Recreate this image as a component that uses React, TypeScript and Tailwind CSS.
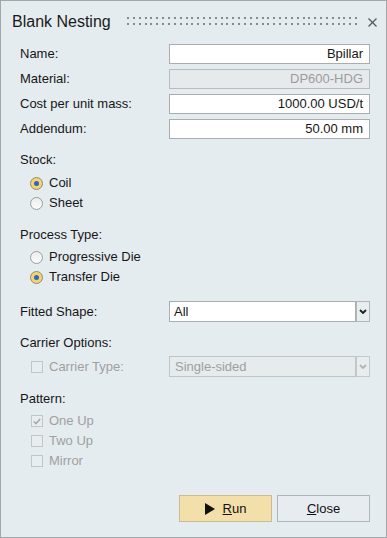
import React from "react";

function Radio({ checked, label }: { checked: boolean; label: string }) {
  return (
    <div className="flex items-center h-[20px] pl-[10px]">
      {checked ? (
        <span className="w-[13px] h-[13px] rounded-full border border-[#8f8b7c] bg-[#f6d36c] flex items-center justify-center">
          <span className="w-[5px] h-[5px] rounded-full bg-[#2b66c9]" />
        </span>
      ) : (
        <span className="w-[13px] h-[13px] rounded-full border border-[#9c9c9c] bg-gradient-to-b from-[#ececec] to-[#fbfbfb]" />
      )}
      <span className="ml-[6px] text-[#161616]">{label}</span>
    </div>
  );
}

function Check({ checked, label }: { checked: boolean; label: string }) {
  return (
    <div className="flex items-center h-[20px] pl-[11px]">
      <span className="w-[12px] h-[12px] border border-[#c3c6c8] bg-[#e8edf0] flex items-center justify-center">
        {checked && (
          <svg width="8" height="7" viewBox="0 0 8 7">
            <polyline points="0.8,3.5 3,5.6 7.2,1" fill="none" stroke="#a8a8a8" strokeWidth="1.6" />
          </svg>
        )}
      </span>
      <span className="ml-[6px] text-[#a0a0a0]">{label}</span>
    </div>
  );
}

function Chevron({ color }: { color: string }) {
  return (
    <svg width="8" height="5" viewBox="0 0 8 5">
      <polyline points="1,1 4,4 7,1" fill="none" stroke={color} strokeWidth="1.8" />
    </svg>
  );
}

const dots = Array.from({ length: 40 }, (_, i) => Math.round(i * 5.85));

export default function App() {
  const fields = [
    { label: "Name:", value: "Bpillar", disabled: false },
    { label: "Material:", value: "DP600-HDG", disabled: true },
    { label: "Cost per unit mass:", value: "1000.00 USD/t", disabled: false },
    { label: "Addendum:", value: "50.00 mm", disabled: false },
  ];
  return (
    <div className="w-[387px] h-[538px] border border-[#a3a7aa] bg-[#e5ecf0] font-['Liberation_Sans',Arial,sans-serif] text-[13px] text-[#161616] flex flex-col">
      {/* Title bar */}
      <div className="mt-[10px] h-[22px] pl-[11px] flex items-center">
        <div className="w-[115px] text-[16px] leading-[22px] text-[#1a1a1a]">Blank Nesting</div>
        <svg width="231" height="22" className="shrink-0">
          {dots.map((x) => (
            <g key={x}>
              <rect x={x} y="6" width="2" height="2" fill="#878b8e" />
              <rect x={x} y="12" width="2" height="2" fill="#878b8e" />
            </g>
          ))}
        </svg>
        <svg width="9" height="9" viewBox="0 0 9 9" className="ml-[10px] shrink-0">
          <line x1="0.5" y1="0.5" x2="8.5" y2="8.5" stroke="#5a5a5a" strokeWidth="1.2" />
          <line x1="8.5" y1="0.5" x2="0.5" y2="8.5" stroke="#5a5a5a" strokeWidth="1.2" />
        </svg>
      </div>

      <div className="pl-[19px] pr-[16px] flex flex-col">
        {/* Fields */}
        <div className="mt-[11px] flex flex-col gap-[5px]">
          {fields.map((f) => (
            <div key={f.label} className="grid grid-cols-[149px_201px] h-[20px] items-center">
              <span>{f.label}</span>
              {f.disabled ? (
                <div className="h-[20px] border border-[#b9bcbe] bg-[#e6eaed] text-[#9c9c9c] text-right pr-[6px] leading-[18px]">
                  {f.value}
                </div>
              ) : (
                <div className="h-[20px] border border-[#a9adb0] bg-white text-right pr-[6px] leading-[18px]">
                  {f.value}
                </div>
              )}
            </div>
          ))}
        </div>

        {/* Stock */}
        <div className="mt-[12px] h-[18px] leading-[18px]">Stock:</div>
        <div className="mt-[4px]">
          <Radio checked label="Coil" />
          <Radio checked={false} label="Sheet" />
        </div>

        {/* Process type */}
        <div className="mt-[13px] h-[18px] leading-[18px]">Process Type:</div>
        <div className="mt-[3px]">
          <Radio checked={false} label="Progressive Die" />
          <Radio checked label="Transfer Die" />
        </div>

        {/* Fitted shape */}
        <div className="mt-[14px] grid grid-cols-[149px_201px] h-[21px] items-center">
          <span>Fitted Shape:</span>
          <div className="flex h-[21px]">
            <div className="flex-1 border border-[#a9adb0] bg-white pl-[4px] leading-[19px]">All</div>
            <div className="w-[14px] border border-[#b3b7ba] bg-[#e8edf0] flex items-center justify-center">
              <Chevron color="#1e1e1e" />
            </div>
          </div>
        </div>

        {/* Carrier options */}
        <div className="mt-[12px] h-[18px] leading-[18px]">Carrier Options:</div>
        <div className="mt-[4px] grid grid-cols-[149px_201px] h-[21px] items-center">
          <Check checked={false} label="Carrier Type:" />
          <div className="flex h-[21px]">
            <div className="flex-1 border border-[#c1c4c6] bg-[#e6ebee] text-[#a0a0a0] pl-[5px] leading-[19px]">
              Single-sided
            </div>
            <div className="w-[14px] border border-[#c6c9cb] bg-[#e8edf0] flex items-center justify-center">
              <Chevron color="#b4b4b4" />
            </div>
          </div>
        </div>

        {/* Pattern */}
        <div className="mt-[13px] h-[18px] leading-[18px]">Pattern:</div>
        <div className="mt-[3px]">
          <Check checked label="One Up" />
          <Check checked={false} label="Two Up" />
          <Check checked={false} label="Mirror" />
        </div>

        {/* Buttons */}
        <div className="mt-[24px] flex justify-end gap-[5px]">
          <button className="w-[93px] h-[27px] border border-[#c9bc93] bg-[#f3dfaa] flex items-center justify-center text-[13px] text-[#111]">
            <svg width="10" height="12" viewBox="0 0 10 12" className="mr-[8px]">
              <polygon points="0,0 10,6 0,12" fill="#111" />
            </svg>
            <span>
              <span className="underline">R</span>un
            </span>
          </button>
          <button className="w-[93px] h-[27px] border border-[#b1b5b8] bg-[#e6ecf0] flex items-center justify-center text-[13px] text-[#111]">
            <span>
              <span className="underline">C</span>lose
            </span>
          </button>
        </div>
      </div>
    </div>
  );
}
